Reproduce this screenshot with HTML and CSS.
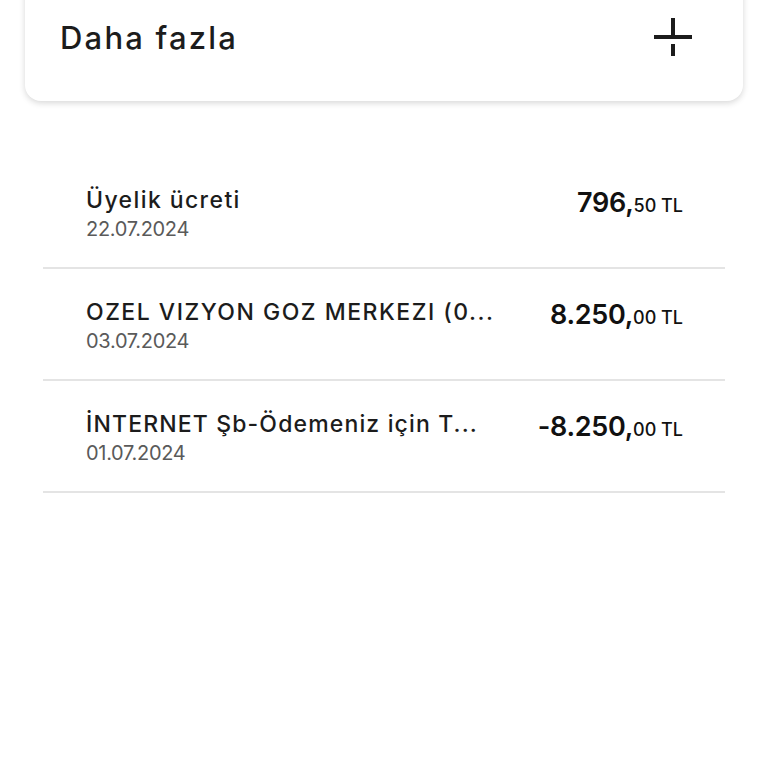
FILE: index.html
```html
<!DOCTYPE html>
<html lang="tr">
<head>
<meta charset="utf-8">
<link rel="stylesheet" href="styles.css">
</head>
<body>
<div class="card">
  <span class="card-title">Daha fazla</span>
  <svg class="plus" width="40" height="40" viewBox="0 0 40 40">
    <rect x="0" y="17" width="38" height="4" fill="#1c1c1c"/>
    <rect x="17" y="0" width="4" height="17" fill="#1c1c1c"/>
    <rect x="17" y="26" width="4" height="12" fill="#1c1c1c"/>
  </svg>
</div>
<ul class="list">
  <li class="row">
    <div class="info">
      <div class="title">Üyelik ücreti</div>
      <div class="date">22.07.2024</div>
    </div>
    <div class="amount"><span class="int">796,</span><span class="dec">50 TL</span></div>
  </li>
  <li class="row">
    <div class="info">
      <div class="title">OZEL VIZYON GOZ MERKEZI (0...</div>
      <div class="date">03.07.2024</div>
    </div>
    <div class="amount"><span class="int">8.250,</span><span class="dec">00 TL</span></div>
  </li>
  <li class="row">
    <div class="info">
      <div class="title">İNTERNET Şb-Ödemeniz için T...</div>
      <div class="date">01.07.2024</div>
    </div>
    <div class="amount"><span class="int">-8.250,</span><span class="dec">00 TL</span></div>
  </li>
</ul>
</body>
</html>
```
FILE: styles.css
```css
* { box-sizing: border-box; }
html, body { margin: 0; padding: 0; background: #fff; }
body {
  font-family: "Inter", "Noto Sans", sans-serif;
  color: #1c1c1c;
  width: 768px;
  height: 768px;
  overflow: hidden;
}
.card {
  margin: -26px 25px 0 25px;
  height: 127px;
  padding: 26px 49px 0 35px;
  background: #fff;
  border-radius: 16px;
  box-shadow: 0 2px 6px rgba(0,0,0,0.16);
  display: flex;
  align-items: center;
  justify-content: space-between;
}
.card-title {
  font-size: 31px;
  font-weight: 500;
  letter-spacing: 2.2px;
  position: relative;
  top: -13px;
}
.plus { display: block; position: relative; top: -13px; }
.list {
  list-style: none;
  margin: 56px 43px 0 43px;
  padding: 0;
}
.row {
  height: 112px;
  border-bottom: 2px solid #e4e4e4;
  display: flex;
  justify-content: space-between;
  align-items: flex-start;
  padding: 29px 42px 0 43px;
}
.info { min-width: 0; }
.title {
  font-size: 23px;
  font-weight: 500;
  line-height: 28px;
  letter-spacing: 1.1px;
  white-space: nowrap;
  color: #1c1c1c;
}
.row:first-child .title { letter-spacing: 1.4px; }
.row:nth-child(2) .title { letter-spacing: 1.5px; }
.row:nth-child(3) .title { letter-spacing: 1.15px; }
.date {
  font-size: 20px;
  line-height: 24px;
  margin-top: 3px;
  letter-spacing: -0.3px;
  color: #5a5a5a;
}
.amount {
  padding-top: 0;
  white-space: nowrap;
  color: #111;
}
.int { font-size: 27px; font-weight: 600; letter-spacing: -0.3px; }
.dec { font-size: 18px; font-weight: 500; }
```
